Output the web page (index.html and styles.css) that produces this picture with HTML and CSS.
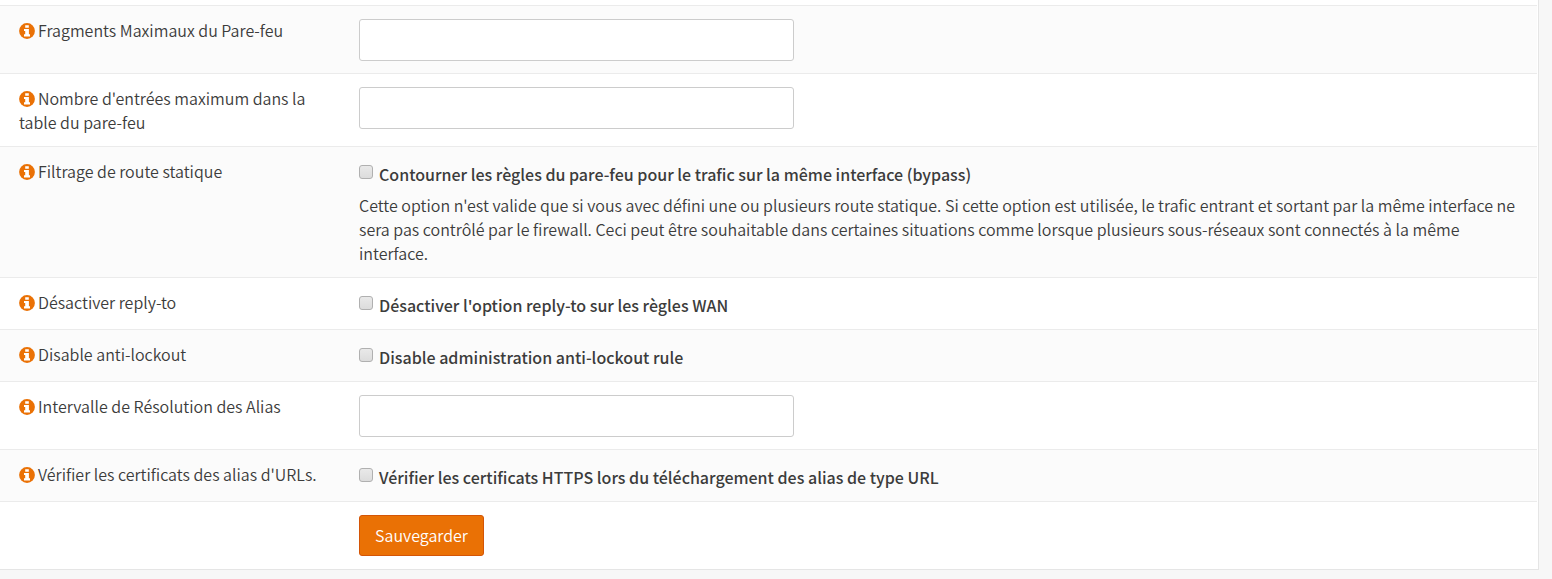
FILE: index.html
```
<!DOCTYPE html>
<html lang="fr">
<head>
  <meta charset="UTF-8">
  <meta name="viewport" content="width=device-width, initial-scale=1.0">
  <title>Pare-feu : Avancé</title>
  <link rel="stylesheet" href="styles.css">
</head>
<body>
  <svg class="sprite" aria-hidden="true">
    <symbol id="info" viewBox="0 0 16 16">
      <circle cx="8" cy="8" r="7.9" fill="#ea7105"/>
      <path fill="#fff" d="M6.2 2.2h3.6v2.6H6.2zM5 6h4.9v5.3H11v2.1H5v-2.1h1.2V8.1H5z"/>
    </symbol>
  </svg>
  <main class="content-box">
    <form>
      <table class="settings">
        <tr>
          <td><svg class="icon"><use href="#info"/></svg><label for="maxfrags">Fragments Maximaux du Pare-feu</label></td>
          <td><input type="text" class="field" id="maxfrags"></td>
        </tr>
        <tr>
          <td><svg class="icon"><use href="#info"/></svg><label for="maxentries">Nombre d'entrées maximum dans la table du pare-feu</label></td>
          <td><input type="text" class="field" id="maxentries"></td>
        </tr>
        <tr>
          <td><svg class="icon"><use href="#info"/></svg>Filtrage de route statique</td>
          <td>
            <div class="option">
              <input type="checkbox" id="bypass">
              <label for="bypass">Contourner les règles du pare-feu pour le trafic sur la même interface (bypass)</label>
            </div>
            <p class="help">Cette option n'est valide que si vous avec défini une ou plusieurs route statique. Si cette option est utilisée, le trafic entrant et sortant par la même interface ne sera pas contrôlé par le firewall. Ceci peut être souhaitable dans certaines situations comme lorsque plusieurs sous-réseaux sont connectés à la même interface.</p>
          </td>
        </tr>
        <tr>
          <td><svg class="icon"><use href="#info"/></svg>Désactiver reply-to</td>
          <td>
            <div class="option">
              <input type="checkbox" id="replyto">
              <label for="replyto">Désactiver l'option reply-to sur les règles WAN</label>
            </div>
          </td>
        </tr>
        <tr>
          <td><svg class="icon"><use href="#info"/></svg>Disable anti-lockout</td>
          <td>
            <div class="option">
              <input type="checkbox" id="lockout">
              <label for="lockout">Disable administration anti-lockout rule</label>
            </div>
          </td>
        </tr>
        <tr>
          <td><svg class="icon"><use href="#info"/></svg><label for="interval">Intervalle de Résolution des Alias</label></td>
          <td><input type="text" class="field" id="interval"></td>
        </tr>
        <tr>
          <td><svg class="icon"><use href="#info"/></svg>Vérifier les certificats des alias d'URLs.</td>
          <td>
            <div class="option">
              <input type="checkbox" id="checkcert">
              <label for="checkcert">Vérifier les certificats HTTPS lors du téléchargement des alias de type URL</label>
            </div>
          </td>
        </tr>
        <tr>
          <td></td>
          <td><button type="submit" class="btn">Sauvegarder</button></td>
        </tr>
      </table>
    </form>
  </main>
</body>
</html>
```
FILE: styles.css
```
* {
  box-sizing: border-box;
}
body {
  margin: 0;
  background: #f7f7f7;
  color: #3c3c3b;
  font-family: "Source Sans Pro", "Noto Sans CJK JP", sans-serif;
  font-size: 16px;
  font-weight: 350;
  line-height: 24px;
}
.sprite {
  display: none;
}
.content-box {
  margin-right: 13px;
  padding: 5px 1px 1px 0;
  background: #fff;
  border-right: 1px solid #e5e5e5;
  border-bottom: 1px solid #e5e5e5;
}
.settings {
  width: 100%;
  table-layout: fixed;
  border-spacing: 0;
}
.settings td {
  padding: 13px 20px 12px 25px;
  vertical-align: top;
  border-top: 1px solid #ebebeb;
}
.settings td:first-child {
  width: 334px;
  padding: 12px 12px 12px 19px;
}
.settings tr:nth-child(odd) {
  background: #fbfbfb;
}
.settings tr:last-child {
  background: #fff;
}
.icon {
  width: 16px;
  height: 16px;
  margin-right: 3px;
  vertical-align: -2px;
}
.field {
  display: block;
  width: 435px;
  max-width: 100%;
  height: 42px;
  padding: 8px 12px;
  border: 1px solid #ccc;
  border-radius: 3px;
  background: #fff;
  font: inherit;
}
.option {
  display: flex;
  align-items: flex-start;
  gap: 6px;
}
.option input {
  appearance: none;
  flex: none;
  width: 14px;
  height: 14px;
  margin: 5px 0 0;
  border: 1px solid #b0b0b0;
  border-radius: 3px;
  background: linear-gradient(#e9e9e9, #dcdcdc);
}
.option input:checked {
  background: #ea7105;
}
.option label {
  padding-top: 2px;
  font-weight: 500;
}
.help {
  margin: 7px 0 0;
}
.btn {
  display: block;
  height: 41px;
  padding: 0 15px 2px;
  border: 1px solid #d45506;
  border-radius: 3px;
  background: #ea7105;
  color: #fff;
  font: inherit;
  cursor: pointer;
}
```
